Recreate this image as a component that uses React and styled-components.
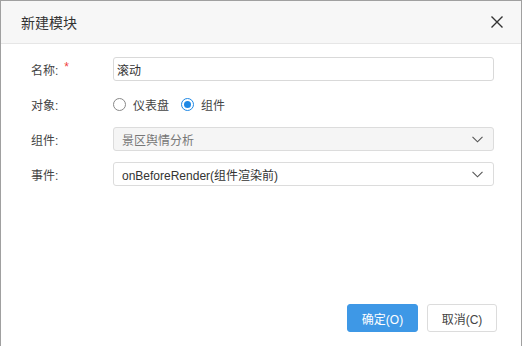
import styled, { createGlobalStyle } from 'styled-components';

const GlobalStyle = createGlobalStyle`
  html, body {
    margin: 0;
    padding: 0;
    background: #fff;
  }
  * {
    box-sizing: border-box;
  }
`;

const FONT = `"Liberation Sans", "Noto Sans CJK SC", sans-serif`;

// 대화상자 전체
const Dialog = styled.div`
  width: 522px;
  height: 346px;
  border: 1px solid #a0a0a0;
  border-bottom: none;
  background: #fff;
  display: flex;
  flex-direction: column;
  font-family: ${FONT};
  font-size: 12px;
  color: #333;
`;

const Header = styled.div`
  height: 43px;
  flex-shrink: 0;
  background: #f7f7f7;
  border-bottom: 1px solid #e6e6e6;
  display: flex;
  align-items: center;
  justify-content: space-between;
  padding: 0 17px 0 20px;
`;

const Title = styled.div`
  font-size: 14px;
  color: #333;
`;

const CloseButton = styled.button`
  border: none;
  background: none;
  padding: 0;
  width: 14px;
  height: 14px;
  display: flex;
  align-items: center;
  justify-content: center;
  cursor: pointer;
`;

const Body = styled.div`
  flex: 1;
  padding: 13px 27px 0 30px;
  display: flex;
  flex-direction: column;
  gap: 11px;
`;

const Row = styled.div`
  display: flex;
  align-items: center;
  height: 24px;
`;

const Label = styled.div`
  width: 82px;
  flex-shrink: 0;
  color: #444;
  display: flex;
  align-items: center;
`;

const Required = styled.span`
  color: #f04040;
  margin-left: 6px;
  font-size: 12px;
  position: relative;
  top: -2px;
`;

const Input = styled.input`
  flex: 1;
  height: 24px;
  border: 1px solid #d9d9d9;
  border-radius: 3px;
  padding: 0 3px;
  font-family: ${FONT};
  font-size: 12px;
  color: #333;
  outline: none;
`;

const Select = styled.div`
  flex: 1;
  height: 24px;
  border: 1px solid #dcdcdc;
  border-radius: 3px;
  padding: 0 10px 0 8px;
  display: flex;
  align-items: center;
  justify-content: space-between;
  background: ${(props) => (props.disabled ? '#f5f5f5' : '#fff')};
  color: ${(props) => (props.disabled ? '#777' : '#333')};
`;

const RadioGroup = styled.div`
  display: flex;
  align-items: center;
  gap: 12px;
`;

const RadioItem = styled.label`
  display: flex;
  align-items: center;
  gap: 7px;
  color: #444;
`;

const RadioCircle = styled.span`
  width: 13px;
  height: 13px;
  border-radius: 50%;
  border: 1px solid ${(props) => (props.checked ? '#1e88e5' : '#888')};
  display: flex;
  align-items: center;
  justify-content: center;
  &::after {
    content: '';
    width: 7px;
    height: 7px;
    border-radius: 50%;
    background: ${(props) => (props.checked ? '#1e88e5' : 'transparent')};
  }
`;

const Footer = styled.div`
  display: flex;
  justify-content: flex-end;
  gap: 9px;
  padding: 0 24px 14px 0;
`;

const Button = styled.button`
  width: ${(props) => (props.primary ? '71px' : '70px')};
  height: 28px;
  border-radius: 3px;
  font-family: ${FONT};
  font-size: 12px;
  cursor: pointer;
  border: 1px solid ${(props) => (props.primary ? '#3e98e6' : '#dcdcdc')};
  background: ${(props) => (props.primary ? '#3e98e6' : '#fff')};
  color: ${(props) => (props.primary ? '#fff' : '#444')};
`;

const Chevron = () => (
  <svg width="11" height="7" viewBox="0 0 11 7">
    <path d="M0.5 0.8 L5.5 5.8 L10.5 0.8" fill="none" stroke="#555" strokeWidth="1.1" />
  </svg>
);

const App = () => {
  return (
    <>
      <GlobalStyle />
      <Dialog>
        <Header>
          <Title>新建模块</Title>
          <CloseButton>
            <svg width="12" height="12" viewBox="0 0 12 12">
              <path d="M0.5 0.5 L11.5 11.5 M11.5 0.5 L0.5 11.5" stroke="#333" strokeWidth="1.4" />
            </svg>
          </CloseButton>
        </Header>
        <Body>
          <Row>
            <Label>
              名称:<Required>*</Required>
            </Label>
            <Input defaultValue="滚动" />
          </Row>
          <Row>
            <Label>对象:</Label>
            <RadioGroup>
              <RadioItem>
                <RadioCircle />
                仪表盘
              </RadioItem>
              <RadioItem>
                <RadioCircle checked />
                组件
              </RadioItem>
            </RadioGroup>
          </Row>
          <Row>
            <Label>组件:</Label>
            <Select disabled>
              <span>景区舆情分析</span>
              <Chevron />
            </Select>
          </Row>
          <Row>
            <Label>事件:</Label>
            <Select>
              <span>onBeforeRender(组件渲染前)</span>
              <Chevron />
            </Select>
          </Row>
        </Body>
        <Footer>
          <Button primary>确定(O)</Button>
          <Button>取消(C)</Button>
        </Footer>
      </Dialog>
    </>
  );
};

export default App;
